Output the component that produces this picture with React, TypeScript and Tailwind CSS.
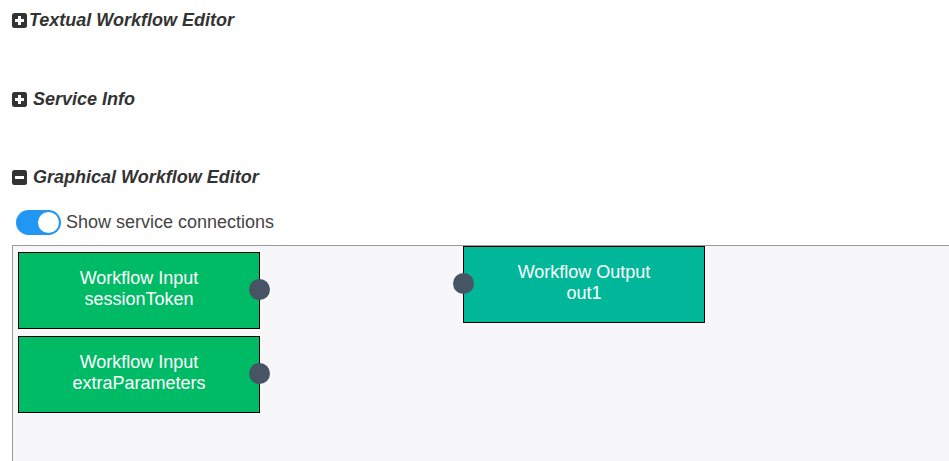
import { useState } from 'react';

type NodeProps = {
  title: string;
  name: string;
  left: number;
  top: number;
  kind: 'input' | 'output';
};

function SquareIcon({ open }: { open: boolean }) {
  return (
    <svg width="15" height="15" viewBox="0 0 15 15" className="shrink-0">
      <rect x="0" y="0" width="15" height="15" rx="2.5" fill="#333" />
      <rect x="3" y="6" width="9" height="3" fill="#fff" />
      {!open && <rect x="6" y="3" width="3" height="9" fill="#fff" />}
    </svg>
  );
}

function Section({ open, label, gap = true }: { open: boolean; label: string; gap?: boolean }) {
  return (
    <div className="flex h-[24px] items-center">
      <SquareIcon open={open} />
      <span className={`${gap ? 'ml-[6px]' : 'ml-[2px]'} text-[18px] font-bold italic text-[#333]`}>{label}</span>
    </div>
  );
}

function FlowNode({ title, name, left, top, kind }: NodeProps) {
  const bg = kind === 'input' ? 'bg-[#00bb66]' : 'bg-[#00b899]';
  return (
    <div
      className={`absolute flex h-[77px] w-[242px] flex-col items-center justify-center border border-black ${bg} pb-[4px] text-[18px] leading-[21px] text-white`}
      style={{ left, top }}
    >
      <span>{title}</span>
      <span>{name}</span>
      {kind === 'input' ? (
        <span className="absolute right-[-11px] top-[26px] h-[21px] w-[21px] rounded-full bg-[#465464]" />
      ) : (
        <span className="absolute left-[-11px] top-[26px] h-[21px] w-[21px] rounded-full bg-[#465464]" />
      )}
    </div>
  );
}

export default function App() {
  const [show, setShow] = useState(true);

  return (
    <div className="h-[461px] w-[949px] overflow-hidden bg-white pl-[12px] font-['Liberation_Sans',Arial,sans-serif]">
      <div className="pt-[8px]">
        <Section open={false} label="Textual Workflow Editor" gap={false} />
      </div>
      <div className="pt-[55px]">
        <Section open={false} label="Service Info" />
      </div>
      <div className="pt-[54px]">
        <Section open label="Graphical Workflow Editor" />
      </div>

      <div className="mt-[20px] flex items-center pl-[4px]">
        <button
          onClick={() => setShow(!show)}
          className={`relative h-[25px] w-[45px] rounded-full ${show ? 'bg-[#2196f3]' : 'bg-[#ccc]'}`}
        >
          <span
            className={`absolute top-[2px] h-[21px] w-[21px] rounded-full bg-white ${show ? 'left-[22px]' : 'left-[2px]'}`}
          />
        </button>
        <span className="ml-[5px] text-[18px] text-[#444]">Show service connections</span>
      </div>

      <div className="relative mt-[9px] h-[240px] w-[960px] border-l border-t border-[#999] bg-[#f7f7f9]">
        <FlowNode kind="input" title="Workflow Input" name="sessionToken" left={5} top={6} />
        <FlowNode kind="input" title="Workflow Input" name="extraParameters" left={5} top={90} />
        <FlowNode kind="output" title="Workflow Output" name="out1" left={450} top={0} />
      </div>
    </div>
  );
}
